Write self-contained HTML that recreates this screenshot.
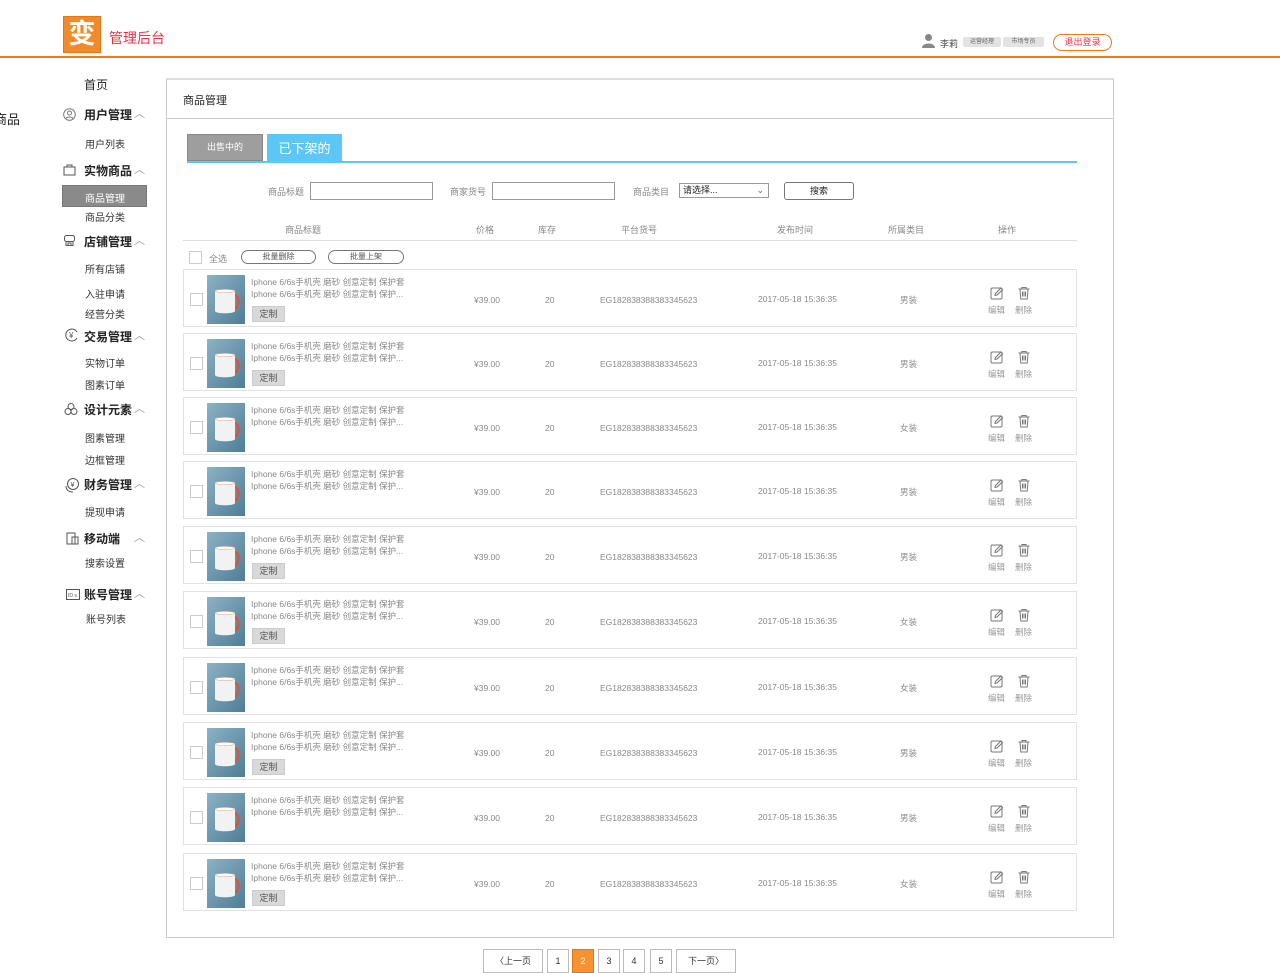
<!DOCTYPE html>
<html><head><meta charset="utf-8">
<style>
*{margin:0;padding:0;box-sizing:border-box}
body{width:1280px;height:970px;background:#fff;font-family:"Liberation Sans","Noto Sans CJK SC",sans-serif;color:#333;position:relative;overflow:hidden;font-size:12px}
.a{position:absolute;white-space:nowrap}
.s9{font-size:9px;color:#888}
.nav{font-size:12px;color:#222;font-weight:bold}
.sub{font-size:10px;color:#333}
.car{font-size:11px;color:#999}
.row{position:absolute;left:183px;width:894px;height:58px;border:1px solid #e2e2e2;background:#fff}
.row .cb{position:absolute;left:6px;top:23px;width:13px;height:13px;border:1px solid #ccc}
.row .im{position:absolute;left:23px;top:5px;width:38px;height:49px}
.row .t1,.row .t2{position:absolute;left:67px;font-size:8.5px;color:#888}
.row .t1{top:6px}.row .t2{top:18px}
.row .dz{position:absolute;left:68px;top:36px;width:33px;height:16px;background:#d9d9d9;border:1px solid #ccc;font-size:9px;color:#555;text-align:center;line-height:14px}
.row .c{position:absolute;top:25px;font-size:8.5px;color:#888}
.row .ic{position:absolute;top:16px}
.row .lb{position:absolute;top:34px;font-size:8.5px;color:#999}
</style></head><body>
<!-- header -->
<div class="a" style="left:63px;top:16px;width:38px;height:37px;background:#f08a2a;border:1px solid #e07818;color:#fff;font-size:27px;font-weight:bold;line-height:35px;text-align:center">变</div>
<div class="a" style="left:109px;top:28px;font-size:14px;color:#e8334a">管理后台</div>
<div class="a" style="left:0;top:56px;width:1280px;height:2px;background:#f07a1c"></div>
<svg class="a" style="left:921px;top:33px" width="15" height="15" viewBox="0 0 15 15"><circle cx="7.5" cy="4.5" r="3.5" fill="#888"/><path d="M1 15 C1 9 14 9 14 15Z" fill="#888"/></svg>
<div class="a" style="left:940px;top:37px;font-size:9px;color:#444">李莉</div>
<div class="a" style="left:963px;top:37px;width:38px;height:10px;background:#e3e3e3;border-radius:2px;font-size:6px;color:#666;text-align:center;line-height:10px">运营经理</div>
<div class="a" style="left:1003px;top:37px;width:41px;height:10px;background:#e3e3e3;border-radius:2px;font-size:6px;color:#666;text-align:center;line-height:10px">市场专员</div>
<div class="a" style="left:1053px;top:34px;width:59px;height:17px;border:1px solid #f07a1c;border-radius:9px;font-size:9px;color:#e8334a;text-align:center;line-height:15px">退出登录</div>
<!-- left fragment -->
<div class="a" style="left:-6px;top:109px;font-size:13px;color:#222">商品</div>
<!-- sidebar -->
<div class="a nav" style="left:84px;top:76px;font-weight:normal">首页</div>
<svg class="a" style="left:63px;top:108px" width="13" height="13" viewBox="0 0 13 13" fill="none" stroke="#777"><circle cx="6.5" cy="6.5" r="5.8"/><circle cx="6.5" cy="5" r="2"/><path d="M3 10.5c1-2 6-2 7 0"/></svg>
<div class="a nav" style="left:84px;top:106px">用户管理</div><div class="a car" style="left:134px;top:105px">︿</div>
<div class="a sub" style="left:85px;top:136px">用户列表</div>
<svg class="a" style="left:63px;top:163px" width="13" height="13" viewBox="0 0 13 13" fill="none" stroke="#555"><rect x="1" y="4" width="11" height="8"/><path d="M4 4V2h5v2"/></svg>
<div class="a nav" style="left:84px;top:162px">实物商品</div><div class="a car" style="left:134px;top:161px">︿</div>
<div class="a" style="left:62px;top:185px;width:85px;height:22px;background:#8a8a8a;border:1px solid #777"></div>
<div class="a sub" style="left:85px;top:190px;color:#fff">商品管理</div>
<div class="a sub" style="left:85px;top:209px">商品分类</div>
<svg class="a" style="left:63px;top:234px" width="13" height="13" viewBox="0 0 13 13" fill="none" stroke="#555"><rect x="1.5" y="1.5" width="10" height="6" rx="2"/><path d="M3 7.5v4h7v-4M5 11V9h3v2"/></svg>
<div class="a nav" style="left:84px;top:233px">店铺管理</div><div class="a car" style="left:134px;top:232px">︿</div>
<div class="a sub" style="left:85px;top:261px">所有店铺</div>
<div class="a sub" style="left:85px;top:286px">入驻申请</div>
<div class="a sub" style="left:85px;top:306px">经营分类</div>
<svg class="a" style="left:65px;top:328px" width="14" height="14" viewBox="0 0 14 14" fill="none" stroke="#555"><path d="M12 4A6 6 0 1 0 12 10"/><text x="4" y="10" font-size="8" fill="#555" stroke="none">¥</text></svg>
<div class="a nav" style="left:84px;top:328px">交易管理</div><div class="a car" style="left:134px;top:327px">︿</div>
<div class="a sub" style="left:85px;top:355px">实物订单</div>
<div class="a sub" style="left:85px;top:377px">图素订单</div>
<svg class="a" style="left:64px;top:402px" width="14" height="14" viewBox="0 0 14 14" fill="none" stroke="#555"><circle cx="7" cy="4.5" r="3"/><circle cx="4" cy="9.5" r="3"/><circle cx="10" cy="9.5" r="3"/></svg>
<div class="a nav" style="left:84px;top:401px">设计元素</div><div class="a car" style="left:134px;top:400px">︿</div>
<div class="a sub" style="left:85px;top:430px">图素管理</div>
<div class="a sub" style="left:85px;top:452px">边框管理</div>
<svg class="a" style="left:64px;top:477px" width="16" height="16" viewBox="0 0 16 16" fill="none" stroke="#555"><circle cx="9" cy="7" r="5.5"/><path d="M2 9c0 4 3 6 7 6"/><text x="6.5" y="10" font-size="7" fill="#555" stroke="none">¥</text></svg>
<div class="a nav" style="left:84px;top:476px">财务管理</div><div class="a car" style="left:134px;top:475px">︿</div>
<div class="a sub" style="left:85px;top:504px">提现申请</div>
<svg class="a" style="left:66px;top:532px" width="14" height="13" viewBox="0 0 14 13" fill="none" stroke="#555"><rect x="1" y="1" width="8" height="11"/><rect x="6" y="5" width="6" height="7"/></svg>
<div class="a nav" style="left:84px;top:530px">移动端</div><div class="a car" style="left:134px;top:529px">︿</div>
<div class="a sub" style="left:85px;top:555px">搜索设置</div>
<svg class="a" style="left:66px;top:589px" width="14" height="11" viewBox="0 0 14 11" fill="none" stroke="#555"><rect x="0.5" y="0.5" width="13" height="10"/><text x="2" y="8" font-size="5" fill="#555" stroke="none">ID ≡</text></svg>
<div class="a nav" style="left:84px;top:586px">账号管理</div><div class="a car" style="left:134px;top:585px">︿</div>
<div class="a sub" style="left:86px;top:611px">账号列表</div>
<!-- panel -->
<div class="a" style="left:166px;top:78px;width:948px;height:860px;border:1px solid #ccc;border-top-width:2px;border-top-color:#ddd"></div>
<div class="a" style="left:183px;top:92px;font-size:11px;color:#222">商品管理</div>
<div class="a" style="left:167px;top:118px;width:946px;height:1px;background:#ccc"></div>
<div class="a" style="left:187px;top:134px;width:76px;height:27px;background:#9e9e9e;border:1px solid #888;color:#fff;font-size:9px;text-align:center;line-height:25px">出售中的</div>
<div class="a" style="left:267px;top:134px;width:75px;height:28px;background:#5ec6f7;color:#fff;font-size:13px;text-align:center;line-height:30px">已下架的</div>
<div class="a" style="left:187px;top:161px;width:890px;height:2px;background:#5ec6f7"></div>
<div class="a s9" style="left:268px;top:185px">商品标题</div>
<div class="a" style="left:310px;top:182px;width:123px;height:18px;border:1px solid #999"></div>
<div class="a s9" style="left:450px;top:185px">商家货号</div>
<div class="a" style="left:492px;top:182px;width:123px;height:18px;border:1px solid #999"></div>
<div class="a s9" style="left:633px;top:185px">商品类目</div>
<div class="a" style="left:679px;top:183px;width:90px;height:15px;border:1px solid #999;font-size:9px;color:#222;padding-left:3px;line-height:13px">请选择...<span style="position:absolute;right:4px;color:#666">⌄</span></div>
<div class="a" style="left:784px;top:182px;width:70px;height:18px;border:1px solid #777;border-radius:3px;font-size:9px;color:#222;text-align:center;line-height:16px">搜索</div>
<div class="a s9" style="left:285px;top:223px">商品标题</div>
<div class="a s9" style="left:476px;top:223px">价格</div>
<div class="a s9" style="left:538px;top:223px">库存</div>
<div class="a s9" style="left:621px;top:223px">平台货号</div>
<div class="a s9" style="left:777px;top:223px">发布时间</div>
<div class="a s9" style="left:888px;top:223px">所属类目</div>
<div class="a s9" style="left:998px;top:223px">操作</div>
<div class="a" style="left:183px;top:240px;width:894px;height:1px;background:#ddd"></div>
<div class="a" style="left:189px;top:251px;width:13px;height:13px;border:1px solid #ccc"></div>
<div class="a s9" style="left:209px;top:252px">全选</div>
<div class="a" style="left:241px;top:250px;width:75px;height:14px;border:1px solid #777;border-radius:8px;font-size:8px;color:#555;text-align:center;line-height:12px">批量删除</div>
<div class="a" style="left:328px;top:250px;width:76px;height:14px;border:1px solid #777;border-radius:8px;font-size:8px;color:#555;text-align:center;line-height:12px">批量上架</div>

<svg width="0" height="0" style="position:absolute"><defs>
<linearGradient id="g" x1="0" y1="0" x2="1" y2="1"><stop offset="0" stop-color="#8bb2c6"/><stop offset="1" stop-color="#4f7d96"/></linearGradient>
<symbol id="mug" viewBox="0 0 38 49"><rect width="38" height="49" fill="url(#g)"/><path d="M27 20c6 0 6 12 0 14" fill="none" stroke="#e8502a" stroke-width="2.2"/><path d="M8 16h20v20c0 3-20 3-20 0z" fill="#f2f2f2"/><ellipse cx="18" cy="16" rx="10" ry="1.6" fill="#fff" stroke="#e8a080" stroke-width=".5"/></symbol>
<symbol id="ed" viewBox="0 0 14 14"><rect x="1" y="2" width="11" height="11" rx="1.5" fill="none" stroke="#777"/><path d="M5 9.5l.4-2L11 2l1.6 1.6L7 9z" fill="none" stroke="#777"/></symbol>
<symbol id="tr" viewBox="0 0 14 14"><path d="M1.5 3h11M5 3V1.5h4V3M3 3l.8 10h6.4L11 3M5.5 5.5v5M7 5.5v5M8.5 5.5v5" fill="none" stroke="#777"/></symbol>
</defs></svg>

<div class="row" style="top:269px"><div class="cb"></div><svg class="im"><use href="#mug"/></svg><div class="t1">Iphone 6/6s手机壳 磨砂 创意定制 保护套</div><div class="t2">Iphone 6/6s手机壳 磨砂 创意定制 保护...</div><div class="dz">定制</div><div class="c" style="left:290px">¥39.00</div><div class="c" style="left:361px">20</div><div class="c" style="left:416px">EG182838388383345623</div><div class="c" style="left:574px;top:24px">2017-05-18 15:36:35</div><div class="c" style="left:716px;top:24px">男装</div><svg class="ic" style="left:806px" width="14" height="14"><use href="#ed"/></svg><svg class="ic" style="left:833px" width="14" height="14"><use href="#tr"/></svg><div class="lb" style="left:804px">编辑</div><div class="lb" style="left:831px">删除</div></div>
<div class="row" style="top:333px"><div class="cb"></div><svg class="im"><use href="#mug"/></svg><div class="t1">Iphone 6/6s手机壳 磨砂 创意定制 保护套</div><div class="t2">Iphone 6/6s手机壳 磨砂 创意定制 保护...</div><div class="dz">定制</div><div class="c" style="left:290px">¥39.00</div><div class="c" style="left:361px">20</div><div class="c" style="left:416px">EG182838388383345623</div><div class="c" style="left:574px;top:24px">2017-05-18 15:36:35</div><div class="c" style="left:716px;top:24px">男装</div><svg class="ic" style="left:806px" width="14" height="14"><use href="#ed"/></svg><svg class="ic" style="left:833px" width="14" height="14"><use href="#tr"/></svg><div class="lb" style="left:804px">编辑</div><div class="lb" style="left:831px">删除</div></div>
<div class="row" style="top:397px"><div class="cb"></div><svg class="im"><use href="#mug"/></svg><div class="t1">Iphone 6/6s手机壳 磨砂 创意定制 保护套</div><div class="t2">Iphone 6/6s手机壳 磨砂 创意定制 保护...</div><div class="c" style="left:290px">¥39.00</div><div class="c" style="left:361px">20</div><div class="c" style="left:416px">EG182838388383345623</div><div class="c" style="left:574px;top:24px">2017-05-18 15:36:35</div><div class="c" style="left:716px;top:24px">女装</div><svg class="ic" style="left:806px" width="14" height="14"><use href="#ed"/></svg><svg class="ic" style="left:833px" width="14" height="14"><use href="#tr"/></svg><div class="lb" style="left:804px">编辑</div><div class="lb" style="left:831px">删除</div></div>
<div class="row" style="top:461px"><div class="cb"></div><svg class="im"><use href="#mug"/></svg><div class="t1">Iphone 6/6s手机壳 磨砂 创意定制 保护套</div><div class="t2">Iphone 6/6s手机壳 磨砂 创意定制 保护...</div><div class="c" style="left:290px">¥39.00</div><div class="c" style="left:361px">20</div><div class="c" style="left:416px">EG182838388383345623</div><div class="c" style="left:574px;top:24px">2017-05-18 15:36:35</div><div class="c" style="left:716px;top:24px">男装</div><svg class="ic" style="left:806px" width="14" height="14"><use href="#ed"/></svg><svg class="ic" style="left:833px" width="14" height="14"><use href="#tr"/></svg><div class="lb" style="left:804px">编辑</div><div class="lb" style="left:831px">删除</div></div>
<div class="row" style="top:526px"><div class="cb"></div><svg class="im"><use href="#mug"/></svg><div class="t1">Iphone 6/6s手机壳 磨砂 创意定制 保护套</div><div class="t2">Iphone 6/6s手机壳 磨砂 创意定制 保护...</div><div class="dz">定制</div><div class="c" style="left:290px">¥39.00</div><div class="c" style="left:361px">20</div><div class="c" style="left:416px">EG182838388383345623</div><div class="c" style="left:574px;top:24px">2017-05-18 15:36:35</div><div class="c" style="left:716px;top:24px">男装</div><svg class="ic" style="left:806px" width="14" height="14"><use href="#ed"/></svg><svg class="ic" style="left:833px" width="14" height="14"><use href="#tr"/></svg><div class="lb" style="left:804px">编辑</div><div class="lb" style="left:831px">删除</div></div>
<div class="row" style="top:591px"><div class="cb"></div><svg class="im"><use href="#mug"/></svg><div class="t1">Iphone 6/6s手机壳 磨砂 创意定制 保护套</div><div class="t2">Iphone 6/6s手机壳 磨砂 创意定制 保护...</div><div class="dz">定制</div><div class="c" style="left:290px">¥39.00</div><div class="c" style="left:361px">20</div><div class="c" style="left:416px">EG182838388383345623</div><div class="c" style="left:574px;top:24px">2017-05-18 15:36:35</div><div class="c" style="left:716px;top:24px">女装</div><svg class="ic" style="left:806px" width="14" height="14"><use href="#ed"/></svg><svg class="ic" style="left:833px" width="14" height="14"><use href="#tr"/></svg><div class="lb" style="left:804px">编辑</div><div class="lb" style="left:831px">删除</div></div>
<div class="row" style="top:657px"><div class="cb"></div><svg class="im"><use href="#mug"/></svg><div class="t1">Iphone 6/6s手机壳 磨砂 创意定制 保护套</div><div class="t2">Iphone 6/6s手机壳 磨砂 创意定制 保护...</div><div class="c" style="left:290px">¥39.00</div><div class="c" style="left:361px">20</div><div class="c" style="left:416px">EG182838388383345623</div><div class="c" style="left:574px;top:24px">2017-05-18 15:36:35</div><div class="c" style="left:716px;top:24px">女装</div><svg class="ic" style="left:806px" width="14" height="14"><use href="#ed"/></svg><svg class="ic" style="left:833px" width="14" height="14"><use href="#tr"/></svg><div class="lb" style="left:804px">编辑</div><div class="lb" style="left:831px">删除</div></div>
<div class="row" style="top:722px"><div class="cb"></div><svg class="im"><use href="#mug"/></svg><div class="t1">Iphone 6/6s手机壳 磨砂 创意定制 保护套</div><div class="t2">Iphone 6/6s手机壳 磨砂 创意定制 保护...</div><div class="dz">定制</div><div class="c" style="left:290px">¥39.00</div><div class="c" style="left:361px">20</div><div class="c" style="left:416px">EG182838388383345623</div><div class="c" style="left:574px;top:24px">2017-05-18 15:36:35</div><div class="c" style="left:716px;top:24px">男装</div><svg class="ic" style="left:806px" width="14" height="14"><use href="#ed"/></svg><svg class="ic" style="left:833px" width="14" height="14"><use href="#tr"/></svg><div class="lb" style="left:804px">编辑</div><div class="lb" style="left:831px">删除</div></div>
<div class="row" style="top:787px"><div class="cb"></div><svg class="im"><use href="#mug"/></svg><div class="t1">Iphone 6/6s手机壳 磨砂 创意定制 保护套</div><div class="t2">Iphone 6/6s手机壳 磨砂 创意定制 保护...</div><div class="c" style="left:290px">¥39.00</div><div class="c" style="left:361px">20</div><div class="c" style="left:416px">EG182838388383345623</div><div class="c" style="left:574px;top:24px">2017-05-18 15:36:35</div><div class="c" style="left:716px;top:24px">男装</div><svg class="ic" style="left:806px" width="14" height="14"><use href="#ed"/></svg><svg class="ic" style="left:833px" width="14" height="14"><use href="#tr"/></svg><div class="lb" style="left:804px">编辑</div><div class="lb" style="left:831px">删除</div></div>
<div class="row" style="top:853px"><div class="cb"></div><svg class="im"><use href="#mug"/></svg><div class="t1">Iphone 6/6s手机壳 磨砂 创意定制 保护套</div><div class="t2">Iphone 6/6s手机壳 磨砂 创意定制 保护...</div><div class="dz">定制</div><div class="c" style="left:290px">¥39.00</div><div class="c" style="left:361px">20</div><div class="c" style="left:416px">EG182838388383345623</div><div class="c" style="left:574px;top:24px">2017-05-18 15:36:35</div><div class="c" style="left:716px;top:24px">女装</div><svg class="ic" style="left:806px" width="14" height="14"><use href="#ed"/></svg><svg class="ic" style="left:833px" width="14" height="14"><use href="#tr"/></svg><div class="lb" style="left:804px">编辑</div><div class="lb" style="left:831px">删除</div></div>

<!-- pagination -->
<div class="a" style="left:483px;top:949px;width:60px;height:24px;border:1px solid #bbb;font-size:9px;color:#333;text-align:center;line-height:22px">〈上一页</div>
<div class="a" style="left:547px;top:949px;width:22px;height:24px;border:1px solid #bbb;font-size:9px;color:#333;text-align:center;line-height:22px">1</div>
<div class="a" style="left:572px;top:949px;width:22px;height:24px;background:#f7922e;border:1px solid #e07818;font-size:9px;color:#fff;text-align:center;line-height:22px">2</div>
<div class="a" style="left:598px;top:949px;width:22px;height:24px;border:1px solid #bbb;font-size:9px;color:#333;text-align:center;line-height:22px">3</div>
<div class="a" style="left:623px;top:949px;width:22px;height:24px;border:1px solid #bbb;font-size:9px;color:#333;text-align:center;line-height:22px">4</div>
<div class="a" style="left:650px;top:949px;width:22px;height:24px;border:1px solid #bbb;font-size:9px;color:#333;text-align:center;line-height:22px">5</div>
<div class="a" style="left:676px;top:949px;width:60px;height:24px;border:1px solid #bbb;font-size:9px;color:#333;text-align:center;line-height:22px">下一页〉</div>
</body></html>
